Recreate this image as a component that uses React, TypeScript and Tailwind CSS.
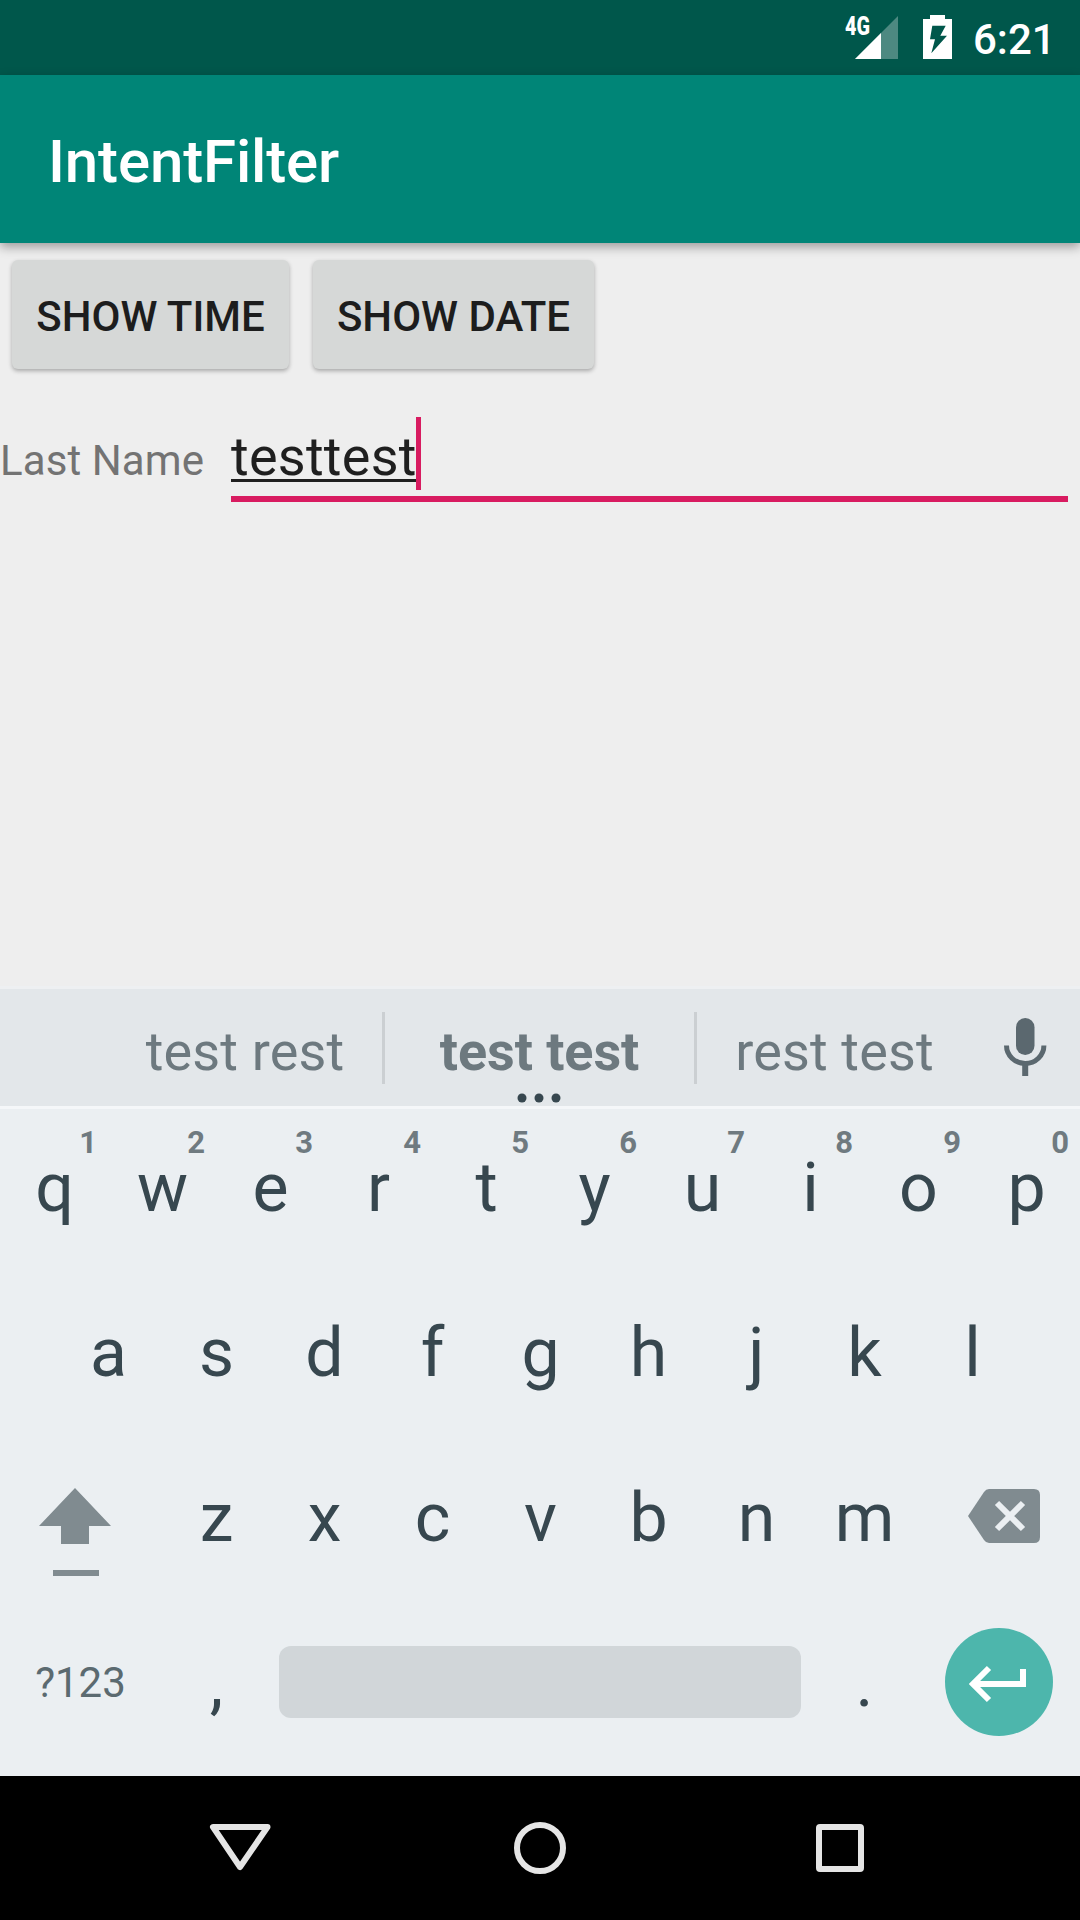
import React from "react";

const topRow = [
  ["q", "1"], ["w", "2"], ["e", "3"], ["r", "4"], ["t", "5"],
  ["y", "6"], ["u", "7"], ["i", "8"], ["o", "9"], ["p", "0"],
];
const homeRow = ["a", "s", "d", "f", "g", "h", "j", "k", "l"];
const bottomRow = ["z", "x", "c", "v", "b", "n", "m"];

function Key({ label, hint }: { label: string; hint?: string }) {
  return (
    <div className="relative h-[165px] w-[108px] pl-px text-center text-[68px] leading-[158px] text-[#37474f]">
      {label}
      {hint && (
        <span className="absolute right-[11px] top-[13px] text-[31px] font-bold leading-[41px] text-[#6f7a80]">
          {hint}
        </span>
      )}
    </div>
  );
}

function StatusBar() {
  return (
    <header className="flex h-[75px] justify-end bg-[#00574b] pr-[29px] text-white">
      <span className="mt-[12px] h-[30px] w-[10px] origin-left scale-x-[0.76] whitespace-nowrap text-[26px] font-black leading-[29px]">
        4G
      </span>
      <svg className="mt-[15px] h-[45px] w-[44px]" viewBox="855 15 44 45">
        <path d="M898 16V59H855Z" fill="#fff" fillOpacity="0.3" />
        <path d="M881 33V59H855Z" fill="#fff" />
      </svg>
      <svg className="ml-[24px] mt-[15px] h-[45px] w-[30px]" viewBox="923 15 30 45">
        <path
          fillRule="evenodd"
          fill="#fff"
          d="M930 15H945V19H952V59H923V19H930ZM932.3 25.7H945.7L940.3 35.7H947L931.3 53.3L935 39.3H930Z"
        />
      </svg>
      <span className="ml-[20px] mt-[10px] w-[78px] text-[42px] font-medium leading-[59px]">6:21</span>
    </header>
  );
}

function SuggestionStrip() {
  return (
    <div className="relative flex h-[123px] border-b-[3px] border-t-[3px] border-b-[#f5f7f9] border-t-[#eef0f2] bg-[#e3e7ea] text-[54px] leading-[125px] text-[#6d797f]">
      <div className="w-[382px] pl-[108px] text-center tracking-[0.15px]">test rest</div>
      <i className="mt-[23px] h-[72px] w-[3px] bg-[#cbcfd2]" />
      <div className="w-[309px] text-center font-bold tracking-[-0.1px]">test test</div>
      <i className="mt-[23px] h-[72px] w-[3px] bg-[#cbcfd2]" />
      <div className="w-[275px] text-center tracking-[0.15px]">rest test</div>
      <svg className="ml-[30px] mt-[28px] h-[60px] w-[46px]" viewBox="1002 1017 46 60">
        <rect x="1016" y="1018" width="18.5" height="37" rx="9.2" fill="#5b686f" />
        <path d="M1006.5 1045.5a18.7 18 0 0 0 37.4 0" fill="none" stroke="#5b686f" strokeWidth="5" />
        <path d="M1022.2 1064h6v12h-6z" fill="#5b686f" />
      </svg>
      <svg className="absolute left-[517px] top-[104px] h-[10px] w-[45px]" viewBox="0 0 45 10" fill="#37474f">
        <circle cx="5" cy="5" r="4.5" />
        <circle cx="22" cy="5" r="4.5" />
        <circle cx="39" cy="5" r="4.5" />
      </svg>
    </div>
  );
}

function Keyboard() {
  return (
    <section className="h-[790px] bg-[#ebeff2]">
      <SuggestionStrip />
      <div className="flex">
        {topRow.map(([k, h]) => <Key key={k} label={k} hint={h} />)}
      </div>
      <div className="flex justify-center">
        {homeRow.map((k) => <Key key={k} label={k} />)}
      </div>
      <div className="flex">
        <div className="w-[162px] pl-[38px] pt-[48px]">
          <svg className="h-[90px] w-[74px]" viewBox="38 1487 74 90" fill="#808b90">
            <path d="M75 1488L111 1526H89V1544H61V1526H39Z" />
            <path d="M53 1570H99V1576H53Z" />
          </svg>
        </div>
        {bottomRow.map((k) => <Key key={k} label={k} />)}
        <div className="pl-[50px] pt-[50px]">
          <svg className="h-[54px] w-[72px]" viewBox="968 1489 72 54">
            <path
              d="M968 1516L984 1492Q986 1489 989 1489H1034Q1040 1489 1040 1495V1537Q1040 1543 1034 1543H989Q986 1543 984 1540Z"
              fill="#808b90"
            />
            <path d="M997 1503L1023 1529M1023 1503L997 1529" stroke="#ebeff2" strokeWidth="6" />
          </svg>
        </div>
      </div>
      <div className="flex">
        <div className="w-[162px] pr-px text-center text-[42px] leading-[157px] text-[#5b6a70]">?123</div>
        <Key label="," />
        <div className="ml-[9px] mr-[9px] mt-[42px] h-[72px] w-[522px] rounded-[12px] bg-[#d1d6d9]" />
        <Key label="." />
        <div className="ml-[27px] mt-[24px] size-[108px] rounded-full bg-[#4db6ac]">
          <svg className="size-[108px]" viewBox="945 1628 108 108" fill="none" stroke="#fff" strokeWidth="6">
            <path d="M989 1668L973 1684L989 1700M973 1684H1023V1669" />
          </svg>
        </div>
      </div>
    </section>
  );
}

export default function App() {
  return (
    <div className="flex h-[1920px] w-[1080px] flex-col overflow-hidden bg-[#eeeeee] font-['Roboto',sans-serif]">
      <StatusBar />
      <div className="relative h-[168px] bg-[#008577] pl-[48px] pt-px text-[60px] font-medium leading-[171px] tracking-[-0.15px] text-white shadow-[0_4px_10px_rgba(0,0,0,0.35)]">
        IntentFilter
      </div>
      <main className="h-[743px]">
        <div className="flex gap-[24px] pl-[12px] pt-[17px]">
          <button className="h-[109px] w-[277px] rounded-[6px] bg-[#d6d8d7] pt-[4px] text-[42px] font-medium text-[#1d1d1d] shadow-[0_2px_4px_rgba(0,0,0,0.3)]">
            SHOW TIME
          </button>
          <button className="h-[109px] w-[281px] rounded-[6px] bg-[#d6d8d7] pt-[4px] text-[42px] font-medium text-[#1d1d1d] shadow-[0_2px_4px_rgba(0,0,0,0.3)]">
            SHOW DATE
          </button>
        </div>
        <div className="mt-[48px] flex">
          <label className="w-[231px] pt-[14px] text-[42px] leading-[59px] tracking-[0.1px] text-[#737373]">
            Last Name
          </label>
          <div className="flex h-[85px] w-[837px] border-b-[6px] border-[#d81b60]">
            <span className="h-[65px] w-[185px] border-b-[3px] border-[#1f1f1f] text-[54px] leading-[79px] tracking-[0.25px] text-[#1f1f1f]">
              testtest
            </span>
            <i className="h-[73px] w-[5px] bg-[#d81b60]" />
          </div>
        </div>
      </main>
      <Keyboard />
      <nav className="h-[144px] bg-black">
        <svg className="h-[144px] w-[1080px]" viewBox="0 0 1080 144" fill="none" stroke="#e5e5e5" strokeWidth="6">
          <path d="M213 51H267.500L240 91Z" strokeLinejoin="round" />
          <circle cx="540" cy="72" r="23" />
          <rect x="819" y="51" width="42" height="42" rx="1" strokeLinejoin="round" />
        </svg>
      </nav>
    </div>
  );
}
